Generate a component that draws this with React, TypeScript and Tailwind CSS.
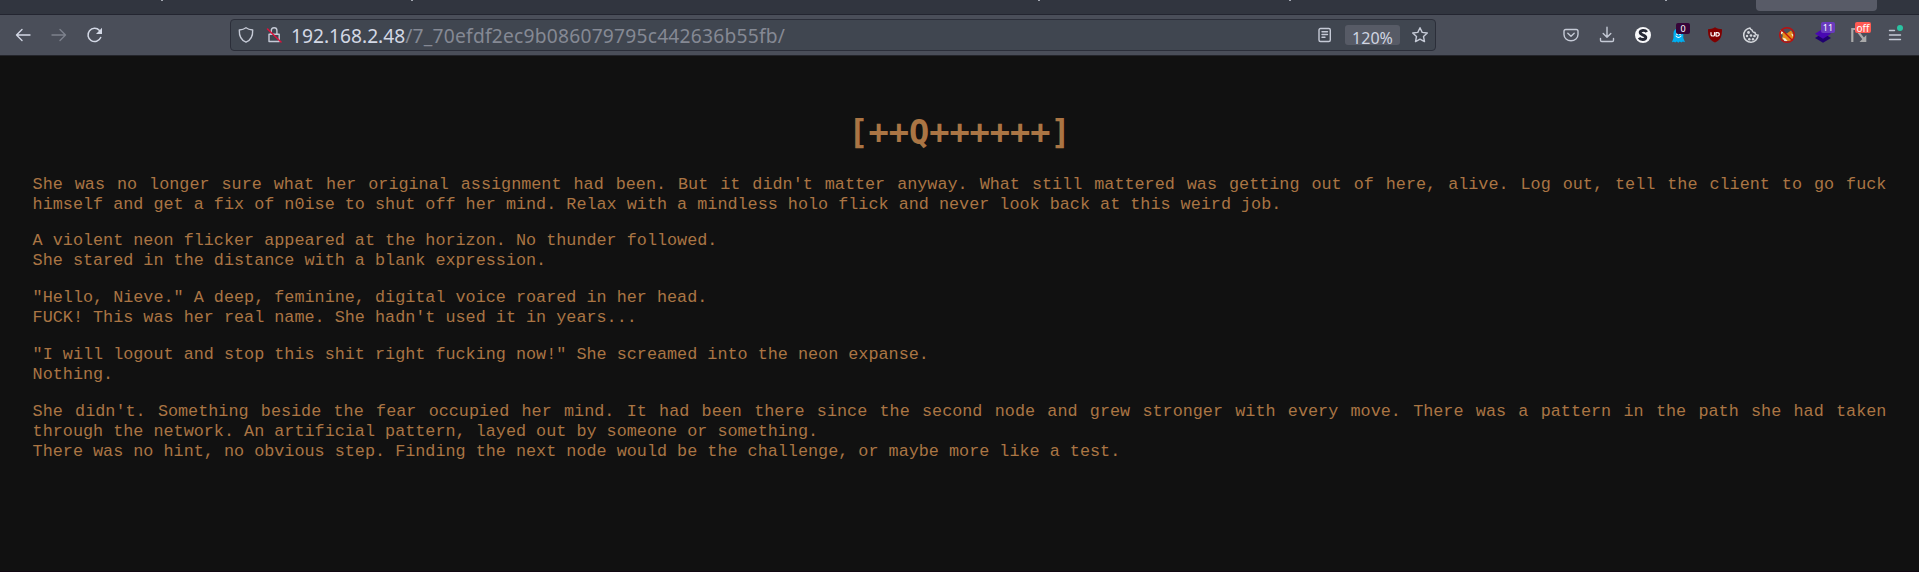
import React from "react";

const specks = [161, 411, 1038, 1289, 1665];

const paragraphs: string[][] = [
  [
    "She was no longer sure what her original assignment had been. But it didn't matter anyway. What still mattered was getting out of here, alive. Log out, tell the client to go fuck himself and get a fix of n0ise to shut off her mind. Relax with a mindless holo flick and never look back at this weird job.",
  ],
  [
    "A violent neon flicker appeared at the horizon. No thunder followed.",
    "She stared in the distance with a blank expression.",
  ],
  [
    "\"Hello, Nieve.\" A deep, feminine, digital voice roared in her head.",
    "FUCK! This was her real name. She hadn't used it in years...",
  ],
  [
    "\"I will logout and stop this shit right fucking now!\" She screamed into the neon expanse.",
    "Nothing.",
  ],
  [
    "She didn't. Something beside the fear occupied her mind. It had been there since the second node and grew stronger with every move. There was a pattern in the path she had taken through the network. An artificial pattern, layed out by someone or something.",
    "There was no hint, no obvious step. Finding the next node would be the challenge, or maybe more like a test.",
  ],
];

type IconProps = { className?: string; children: React.ReactNode };

function Icon({ className = "", children }: IconProps) {
  return (
    <svg
      viewBox="0 0 16 16"
      className={`h-4 w-4 shrink-0 overflow-visible ${className}`}
      fill="none"
      stroke="currentColor"
      strokeWidth="1.4"
      strokeLinecap="round"
      strokeLinejoin="round"
    >
      {children}
    </svg>
  );
}

function TabStrip() {
  return (
    <div className="relative h-[15px] shrink-0 overflow-hidden border-b border-[#232530] bg-[#31353f]">
      {specks.map((x) => (
        <i key={x} className="absolute top-0 h-px w-[2px] bg-[#a4a8b2]" style={{ left: x }} />
      ))}
      <div className="ml-[1756px] h-[11px] w-[121px] rounded-b-[4px] bg-[#585b67]" />
    </div>
  );
}

function AddressBar() {
  return (
    <div className="ml-[127px] flex h-8 w-[1206px] shrink-0 items-center rounded-[4px] border border-[#2b2e39] bg-[#404650] text-[#c5cad6]">
      <Icon className="ml-[7px]">
        <path d="M8 .7c2 1.5 4.200 2 6.700 2.300.2 5.800-1.700 10.200-6.700 12.200C3 13.200 1.100 8.800 1.300 3 3.800 2.700 6 2.200 8 .7Z" />
      </Icon>
      <Icon className="ml-3">
        <path d="M3 7.300h10.200v7.200H3ZM5.300 7V3.500a2.800 2.800 0 0 1 5.600 0V7" />
        <path d="M1.500 2 15 15" stroke="#e0103c" strokeWidth="1.500" />
      </Icon>
      <span className="ml-[9px] whitespace-pre pt-[2px] font-['Noto_Sans',sans-serif] text-[19.2px] leading-7 text-[#d3d8e5]">
        192.168.2.48
        <span className="tracking-[0.240px] text-[#858994]">/7_70efdf2ec9b086079795c442636b55fb/</span>
      </span>
      <div className="ml-auto flex items-center">
        <Icon className="mr-3">
          <rect x="2" y="1.500" width="11.300" height="13" rx="1.500" />
          <path d="M5 4.800h5.500M5 7.500h5.500M5 10.200h3" />
        </Icon>
        <div className="mr-3 flex h-5 w-[55px] justify-center rounded-[3px] bg-[#575b66] font-['Noto_Sans',sans-serif] text-[16px] leading-[27px] text-[#d0d5e1]">
          120%
        </div>
        <Icon className="mr-[7px]">
          <path d="m8 .7 2.200 4.700 5.100.6-3.800 3.500 1 5.100L8 12.100l-4.500 2.500 1-5.100L.7 6l5.100-.6Z" />
        </Icon>
      </div>
    </div>
  );
}

function Badge({ className, children }: { className: string; children: React.ReactNode }) {
  return (
    <span
      className={`absolute flex h-[11px] items-center justify-center rounded-[2px] font-['Noto_Sans',sans-serif] leading-none text-white ${className}`}
    >
      {children}
    </span>
  );
}

function Extensions() {
  return (
    <div className="ml-[127px] flex items-center gap-5 text-[#c5cad6]">
      <Icon>
        <path d="M2.800 2.500h10.400q1.800 0 1.800 1.800v3.200a7 6.300 0 0 1-14 0V4.300q0-1.800 1.800-1.800Z" />
        <path d="m4.800 6.200 3.200 3 3.200-3" />
      </Icon>
      <Icon>
        <path d="M8 .2v10M4.200 6.500 8 10.200l3.800-3.700M1.500 11.500v1.700q0 1.300 1.300 1.300h10.400q1.300 0 1.300-1.300v-1.700" />
      </Icon>
      <Icon>
        <circle cx="8" cy="8" r="8" fill="#f8f8fa" stroke="none" />
        <path d="M11.800 5C10.200 2.600 5 3 5.200 5.700S11 7.700 10.800 10.400 5.500 13.200 4 10.800" stroke="#262936" strokeWidth="2.900" strokeLinecap="butt" />
      </Icon>
      <div className="relative">
        <Icon>
          <path d="M2.500 11V6.200a4.900 5 0 0 1 9.800 0V11l1.700 4.200-2.200-.7-1.500 1-1.500-1-1.500 1.200-1.500-1.200-1.700 1-1.200-.8-2 .5Z" fill="#00aef0" stroke="none" />
          <path d="M5 9q2.500 3 5 0" stroke="#fff" strokeWidth="1.100" />
          <circle cx="6" cy="7" r=".9" fill="#fff" stroke="none" />
          <circle cx="9" cy="7" r=".9" fill="#fff" stroke="none" />
        </Icon>
        <Badge className="-top-[4px] left-[5px] w-[14px] bg-[#360438] text-[9px]">0</Badge>
      </div>
      <Icon>
        <path d="M8 .3C10.500 1.800 12.500 2 15 2.200c0 7-1 10.500-7 13.400C2 12.700 1 9.200 1 2.200 3.500 2 5.500 1.800 8 .3Z" fill="#800000" stroke="none" />
        <path d="M4 5.500v2.200q0 1.300 1.800 1.300t1.700-1.300V5.500M9 5.500V9q3.300.3 3.300-1.700T9 5.500" stroke="#fff" strokeWidth="1.200" />
      </Icon>
      <Icon className="text-[#d4d7dc]">
        <path d="M7 .9a7.200 7.200 0 1 0 8.100 7.200A2.700 2.700 0 0 1 12 5.500 3 3 0 0 1 9 3 2.500 2.500 0 0 1 7 .9Z" strokeWidth="1.500" />
        <g fill="currentColor" stroke="none">
          <circle cx="5.500" cy="5.500" r="1.400" />
          <circle cx="4" cy="9" r="1.200" />
          <circle cx="8" cy="8.500" r="1.300" />
          <circle cx="11.500" cy="9" r="1.300" />
          <circle cx="6.300" cy="12.200" r="1.300" />
          <circle cx="10" cy="12.200" r="1.200" />
        </g>
      </Icon>
      <Icon>
        <path d="m1.500 3 3.300 2.800L8 6.500l1.500-1.200L12 3.500l1.500 2 1.500 4-2.500 4-5.500.8-4-2.300.8-3.500Z" fill="#e58a19" stroke="none" />
        <path d="m1.300 3 3 2.500L2 7.500ZM3.500 10.500l3 1 2 2.500-3 .2ZM12 6.500l2.300 1-.3 2.500Z" fill="#f5ead8" stroke="none" />
        <circle cx="8" cy="8" r="7.300" stroke="#bc1010" strokeWidth="1.400" />
        <path d="m3 3 10 10" stroke="#bc1010" strokeWidth="1.400" />
      </Icon>
      <div className="relative">
        <Icon>
          <path d="m0 11 8-5 8 5-8 4.800Z" fill="#20006f" stroke="none" />
          <path d="m0 6.800 8-5 8 5-8 5Z" fill="#4908b2" stroke="none" />
        </Icon>
        <Badge className="-top-[5px] left-[6px] w-[14px] bg-[#693bbd] text-[9px]">11</Badge>
      </div>
      <div className="relative">
        <Icon className="text-[#a9a9a9]">
          <path d="M1.300 15V2H5l8 10.500" strokeWidth="2.200" strokeLinecap="butt" strokeLinejoin="miter" />
          <path d="M15.300 8v7H8.500Z" fill="currentColor" stroke="none" />
        </Icon>
        <Badge className="-top-[5px] left-[4px] w-[16px] bg-[#ff5a52] text-[10px]">off</Badge>
      </div>
      <div className="relative">
        <Icon>
          <path d="M2.500 3.500h5M2.500 8h11M2.500 12.500h11" />
        </Icon>
        <i className="absolute -top-[2px] left-[10px] h-[6px] w-[6px] rounded-full bg-[#2ac3a2]" />
      </div>
    </div>
  );
}

function Toolbar() {
  return (
    <div className="flex h-[41px] shrink-0 items-center border-b border-[#24252b] bg-[#4a4e59]">
      <div className="ml-[15px] flex items-center gap-5 text-[#d3d8e5]">
        <Icon>
          <path d="M15 8H1.500M7 2.500 1.500 8 7 13.500" />
        </Icon>
        <Icon className="text-[#7d818c]">
          <path d="M1 8h13.500M9 2.500 14.500 8 9 13.500" />
        </Icon>
        <Icon>
          <path d="M13.700 10.500A6.600 6.600 0 1 1 12.500 3.500" strokeWidth="1.500" />
          <path d="M15 .8V7H9Z" fill="currentColor" stroke="none" />
        </Icon>
      </div>
      <AddressBar />
      <Extensions />
    </div>
  );
}

export default function App() {
  return (
    <div className="flex h-[572px] w-full flex-col overflow-hidden bg-[#111111]">
      <TabStrip />
      <Toolbar />
      <main className="flex-1 border-b border-[#100711] px-[32.600px] pt-[57px] font-['Liberation_Mono',monospace] text-[#aa7544]">
        <h1 className="text-center font-['DejaVu_Sans_Mono',monospace] text-[33.6px] font-bold leading-[39px]">
          [++Q++++++]
        </h1>
        <div className="mt-[22.600px] flex flex-col gap-[16.800px] text-justify text-[16.800px] leading-5">
          {paragraphs.map((lines, i) => (
            <p key={i}>
              {lines.map((line, j) => (
                <React.Fragment key={j}>
                  {j > 0 && <br />}
                  {line}
                </React.Fragment>
              ))}
            </p>
          ))}
        </div>
      </main>
    </div>
  );
}
